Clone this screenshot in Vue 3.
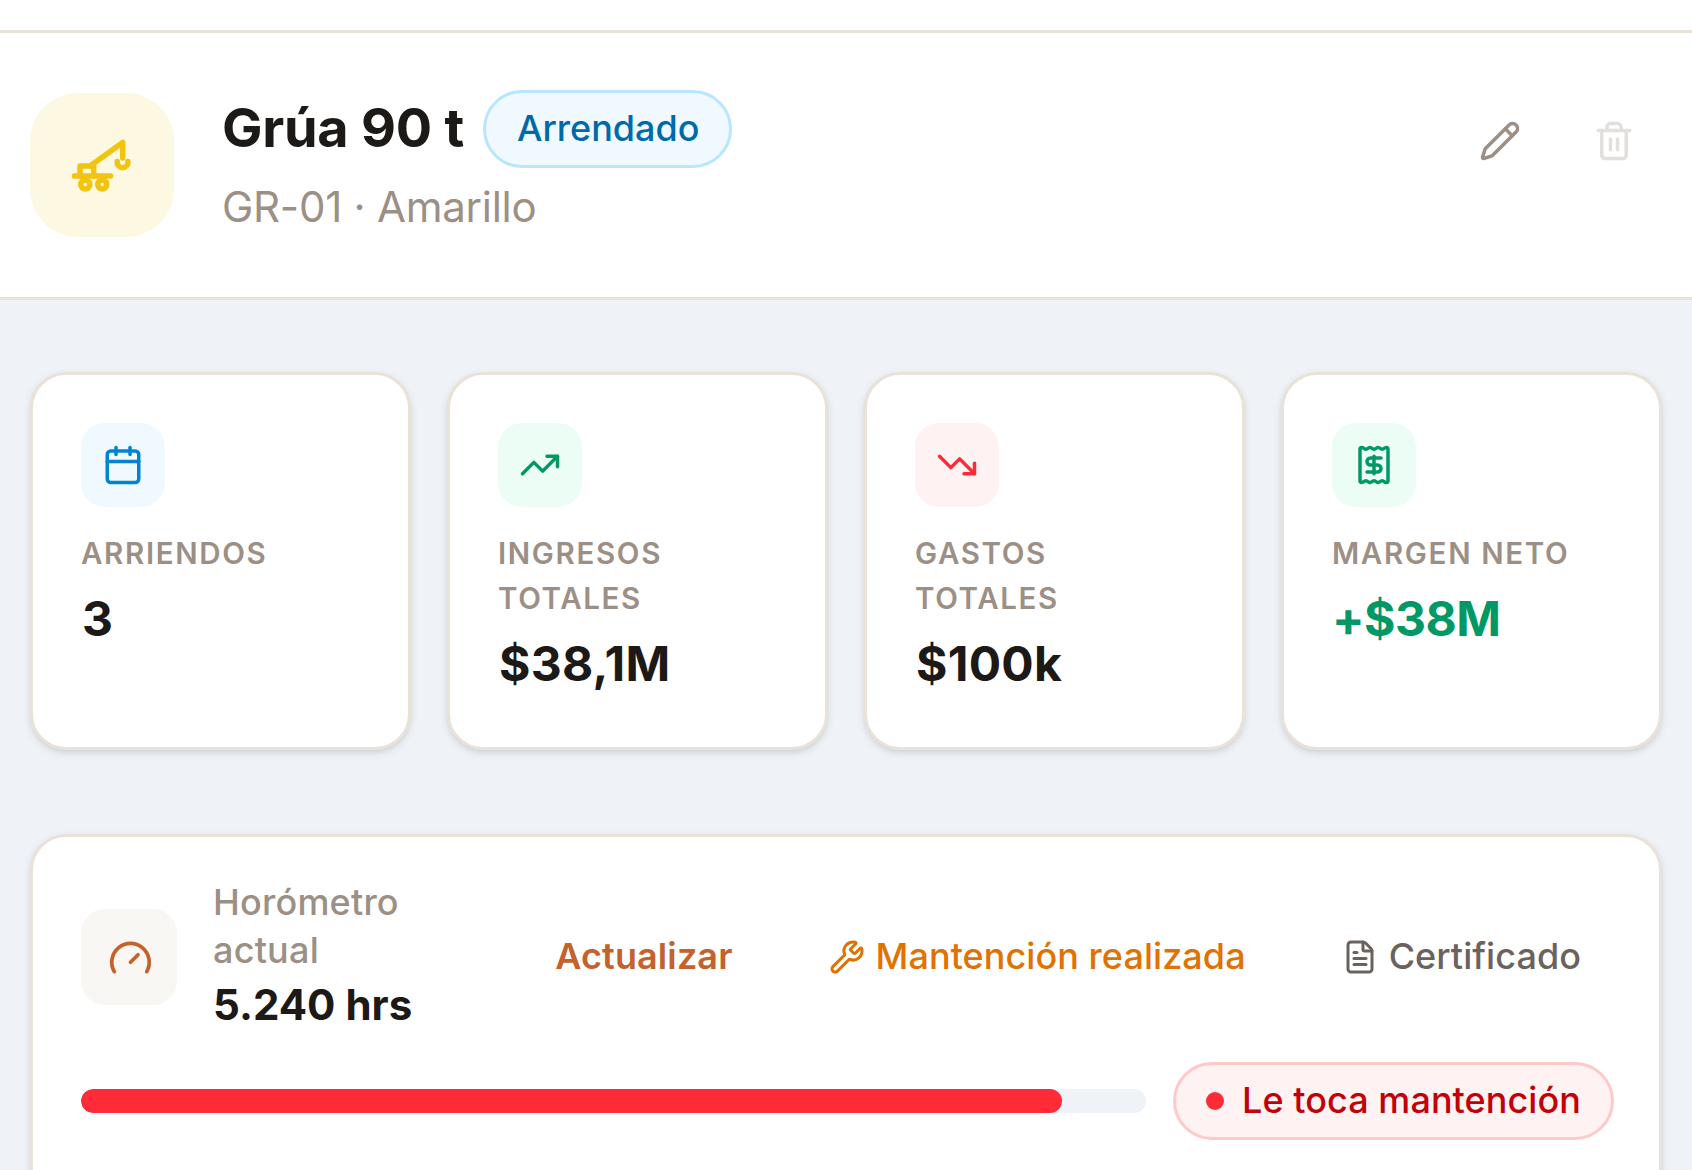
<!-- src/views/EquipmentDetail.vue -->
<template>
  <div class="page">
    <div class="topbar"></div>

    <header class="header">
      <div class="avatar">
        <svg class="crane" viewBox="0 0 60 60">
          <path d="M2.3 41h36.2" />
          <path d="M8 41V31h13.7v10" />
          <path d="M18 31 50.7 7.5V23" />
          <path d="M45.2 26.5a5.4 5.4 0 1 0 10.7 0" />
          <circle cx="13.3" cy="49.5" r="4.5" />
          <circle cx="30.3" cy="49.5" r="4.5" />
        </svg>
      </div>
      <div class="heading">
        <div class="title-row">
          <h1>Grúa 90 t</h1>
          <span class="badge badge-sky">Arrendado</span>
        </div>
        <p class="subtitle">GR-01 · Amarillo</p>
      </div>
      <div class="header-actions">
        <button class="icon-btn">
          <svg class="icon" viewBox="0 0 24 24"><path v-for="d in icons.pencil" :key="d" :d="d" /></svg>
        </button>
        <button class="icon-btn disabled">
          <svg class="icon" viewBox="0 0 24 24"><path v-for="d in icons.trash" :key="d" :d="d" /></svg>
        </button>
      </div>
    </header>

    <main class="content">
      <section class="stats">
        <div v-for="stat in stats" :key="stat.label" class="card stat">
          <div class="stat-icon" :class="stat.tone">
            <svg class="icon" viewBox="0 0 24 24"><path v-for="d in icons[stat.icon]" :key="d" :d="d" /></svg>
          </div>
          <p class="stat-label">{{ stat.label }}</p>
          <p class="stat-value" :class="{ positive: stat.positive }">{{ stat.value }}</p>
        </div>
      </section>

      <section class="card meter">
        <div class="meter-row">
          <div class="meter-icon">
            <svg class="icon" viewBox="0 0 24 24"><path v-for="d in icons.gauge" :key="d" :d="d" /></svg>
          </div>
          <div class="meter-text">
            <p class="meter-label">Horómetro actual</p>
            <p class="meter-value">5.240 hrs</p>
          </div>
          <div class="meter-actions">
            <button class="link primary">Actualizar</button>
            <button class="link amber">
              <svg class="icon" viewBox="0 0 24 24"><path v-for="d in icons.wrench" :key="d" :d="d" /></svg>
              <span>Mantención realizada</span>
            </button>
            <button class="link">
              <svg class="icon" viewBox="0 0 24 24"><path v-for="d in icons.file" :key="d" :d="d" /></svg>
              <span>Certificado</span>
            </button>
          </div>
        </div>
        <div class="progress-row">
          <div class="track">
            <div class="fill" :style="{ width: progress + '%' }"></div>
          </div>
          <span class="badge badge-red"><span class="dot"></span><span>Le toca mantención</span></span>
        </div>
      </section>
    </main>
  </div>
</template>

<script setup>
import { ref } from 'vue';

const progress = ref(92.1);

const stats = [
  { label: 'Arriendos', value: '3', icon: 'calendar', tone: 'sky' },
  { label: 'Ingresos totales', value: '$38,1M', icon: 'up', tone: 'green' },
  { label: 'Gastos totales', value: '$100k', icon: 'down', tone: 'red' },
  { label: 'Margen neto', value: '+$38M', icon: 'receipt', tone: 'green', positive: true },
];

const icons = {
  pencil: [
    'M21.174 6.812a1 1 0 0 0-3.986-3.987L3.842 16.174a2 2 0 0 0-.5.83l-1.321 4.352a.5.5 0 0 0 .623.622l4.353-1.32a2 2 0 0 0 .83-.497z',
    'm15 5 4 4',
  ],
  trash: [
    'M3 6h18',
    'M19 6v14a2 2 0 0 1-2 2H7a2 2 0 0 1-2-2V6',
    'M8 6V4a2 2 0 0 1 2-2h4a2 2 0 0 1 2 2v2',
    'M10 11v6',
    'M14 11v6',
  ],
  calendar: [
    'M8 2v4',
    'M16 2v4',
    'M5 4h14a2 2 0 0 1 2 2v14a2 2 0 0 1-2 2H5a2 2 0 0 1-2-2V6a2 2 0 0 1 2-2z',
    'M3 10h18',
  ],
  up: ['M16 7h6v6', 'm22 7-8.5 8.5-5-5L2 17'],
  down: ['M16 17h6v-6', 'm22 17-8.5-8.5-5 5L2 7'],
  receipt: [
    'M4 3a1 1 0 0 1 1-1 1.3 1.3 0 0 1 .7.2l.933.6a1.3 1.3 0 0 0 1.4 0l.934-.6a1.3 1.3 0 0 1 1.4 0l.933.6a1.3 1.3 0 0 0 1.4 0l.933-.6a1.3 1.3 0 0 1 1.4 0l.934.6a1.3 1.3 0 0 0 1.4 0l.933-.6A1.3 1.3 0 0 1 19 2a1 1 0 0 1 1 1v18a1 1 0 0 1-1 1 1.3 1.3 0 0 1-.7-.2l-.933-.6a1.3 1.3 0 0 0-1.4 0l-.934.6a1.3 1.3 0 0 1-1.4 0l-.933-.6a1.3 1.3 0 0 0-1.4 0l-.933.6a1.3 1.3 0 0 1-1.4 0l-.934-.6a1.3 1.3 0 0 0-1.4 0l-.933.6a1.3 1.3 0 0 1-.7.2 1 1 0 0 1-1-1z',
    'M16 8h-6a2 2 0 0 0 0 4h4a2 2 0 0 1 0 4H8',
    'M12 17V7',
  ],
  gauge: ['m12 14 4-4', 'M3.34 19a10 10 0 1 1 17.32 0'],
  wrench: [
    'M14.7 6.3a1 1 0 0 0 0 1.4l1.6 1.6a1 1 0 0 0 1.4 0l3.106-3.105c.32-.322.863-.22.983.218a6 6 0 0 1-8.259 7.057l-7.91 7.91a1 1 0 0 1-2.999-3l7.91-7.91a6 6 0 0 1 7.057-8.259c.438.12.54.662.219.984z',
  ],
  file: [
    'M6 22a2 2 0 0 1-2-2V4a2 2 0 0 1 2-2h8a2.4 2.4 0 0 1 1.704.706l3.588 3.588A2.4 2.4 0 0 1 20 8v12a2 2 0 0 1-2 2z',
    'M14 2v5a1 1 0 0 0 1 1h5',
    'M10 9H8',
    'M16 13H8',
    'M16 17H8',
  ],
};
</script>

<style>
body { margin: 0; overflow: hidden; }
</style>

<style scoped>
.page {
  height: 1170px; overflow: hidden; background: #eff3f8; color: #1c1917;
  font-family: Inter, "Liberation Sans", sans-serif; font-size: 36px;
}
.page * { box-sizing: border-box; }
h1, p { margin: 0; }
button { display: flex; align-items: center; border: 0; background: none; font: inherit; color: inherit; padding: 0; }
.icon {
  display: block; width: 42px; height: 42px; flex: none;
  fill: none; stroke: currentColor; stroke-width: 2; stroke-linecap: round; stroke-linejoin: round;
}

.topbar { height: 33px; background: #fff; border-bottom: 3px solid #e8e2d9; }

/* header */
.header {
  display: flex; align-items: flex-start; gap: 48px; height: 267px; padding: 57px 30px 0;
  background: #fff; border-bottom: 3px solid #e8e2d9;
}
.avatar {
  display: flex; align-items: center; justify-content: center; flex: none;
  width: 144px; height: 144px; margin-top: 3px; border-radius: 48px; background: #fdf8e2;
}
.crane {
  width: 60px; height: 60px; fill: none; stroke: #f1c40f; stroke-width: 5.5;
  stroke-linecap: round; stroke-linejoin: round;
}
.heading { flex: 1; }
.title-row { display: flex; align-items: center; gap: 19px; }
h1 { font-size: 54px; line-height: 76px; padding-bottom: 2px; font-weight: 700; letter-spacing: -0.005em; }
.subtitle { margin-top: 9px; font-size: 42px; line-height: 60px; letter-spacing: -0.006em; color: #9c8f85; }
.header-actions { display: flex; gap: 18px; }
.icon-btn { justify-content: center; width: 96px; height: 102px; color: #9c8f85; }
.disabled { color: #e2dfdc; }

.badge {
  display: inline-flex; align-items: center; flex: none; height: 78px; padding: 0 30px;
  border: 3px solid; border-radius: 39px; line-height: 48px; font-weight: 500; white-space: nowrap;
}
.badge-sky { padding: 0 29px 2px 31px; background: #f0f9ff; border-color: #b8e6fe; color: #0069a8; }
.badge-red { background: #fef2f2; border-color: #ffc9c9; color: #c10007; letter-spacing: 0.06px; }
.badge-red span:last-child { padding-bottom: 2px; }
.dot { width: 18px; height: 18px; margin-right: 18px; border-radius: 50%; background: #fb2c36; }

/* stats */
.content { padding: 72px 30px 0; }
.card {
  background: #fff; border: 3px solid #e8e2d9; border-radius: 36px;
  box-shadow: 0 3px 9px rgba(0, 0, 0, 0.1), 0 3px 6px -3px rgba(0, 0, 0, 0.1);
}
.stats { display: grid; grid-template-columns: repeat(4, 1fr); gap: 36px; }
.stat { height: 378px; padding: 48px; }
.stat-icon {
  display: flex; align-items: center; justify-content: center;
  width: 84px; height: 84px; margin-bottom: 24px; border-radius: 24px;
}
.sky { background: #f0f9ff; color: #0084d1; }
.green { background: #ecfdf5; color: #009966; }
.red { background: #fef2f2; color: #fb2c36; }
.stat-label {
  font-size: 29.5px; line-height: 45px; font-weight: 560; letter-spacing: 0.056em;
  text-transform: uppercase; color: #9c8f85;
}
.stat-value {
  margin: 7px 0 0 1px; font-size: 48px; line-height: 72px; font-weight: 700; letter-spacing: 0.006em;
}
.positive { margin-left: 0; letter-spacing: -0.01em; color: #009966; }

/* hour meter */
.meter { height: 420px; margin-top: 84px; padding: 42px 45px 42px 48px; }
.meter-row { display: flex; align-items: center; }
.meter-icon {
  display: flex; align-items: center; justify-content: center; flex: none;
  width: 96px; height: 96px; margin-right: 36px; padding: 3px 0 0 3px;
  border-radius: 24px; background: #f8f7f4; color: #c4622d;
}
.meter-icon .icon { width: 45px; height: 45px; }
.meter-text { width: 240px; margin-top: -1px; }
.meter-label { line-height: 48px; font-weight: 500; letter-spacing: 0.006em; color: #9c8f85; }
.meter-value { margin-top: 1px; font-size: 42px; line-height: 60px; font-weight: 700; }
.meter-actions { display: flex; gap: 24px; margin: 0 -3px 0 auto; }
.link { gap: 11px; padding: 0 36px; line-height: 48px; font-weight: 500; color: #6b625d; white-space: nowrap; }
.link span { padding-bottom: 2px; letter-spacing: 0.05px; }
.link .icon { width: 36px; height: 36px; }
.link.primary { padding-bottom: 2px; font-weight: 600; letter-spacing: 0.1px; color: #c4622d; }
.link.amber { color: #e17100; }

.progress-row { display: flex; align-items: center; gap: 27px; margin-top: 27px; }
.track { flex: 1; height: 24px; border-radius: 12px; background: #eff3f8; overflow: hidden; }
.fill { height: 100%; border-radius: 12px; background: #ff2c37; }
</style>
